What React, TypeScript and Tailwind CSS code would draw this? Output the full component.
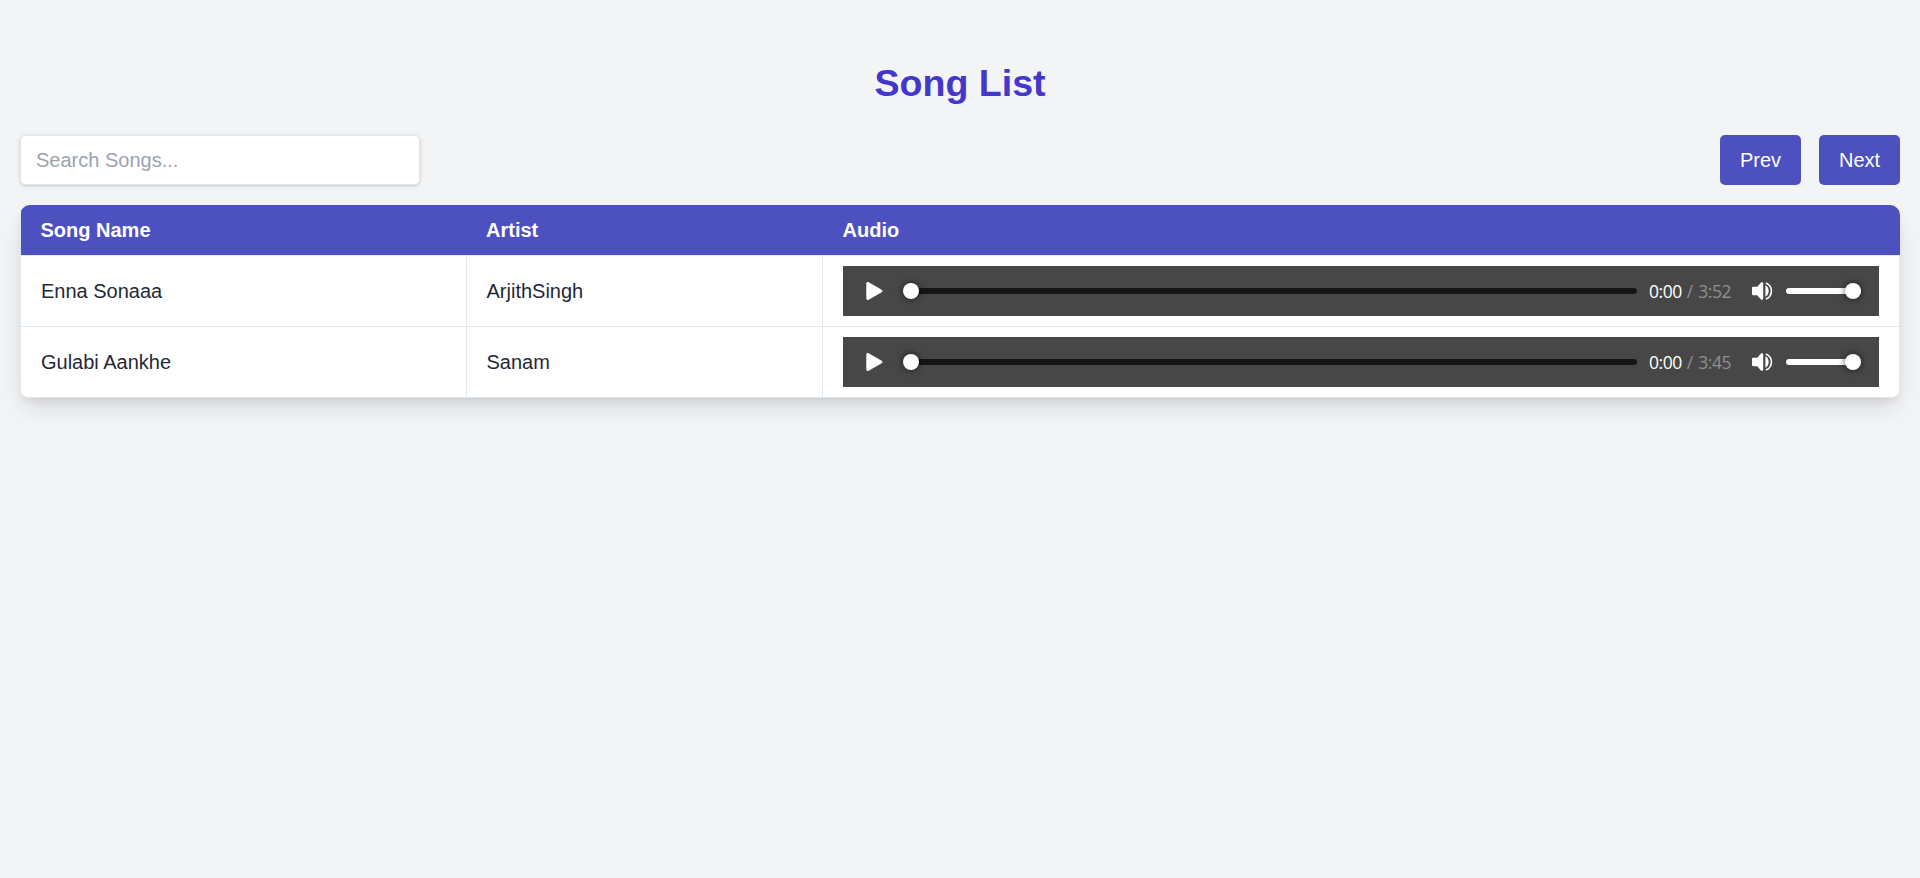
import React, { useState } from "react";

interface Song {
  name: string;
  artist: string;
  duration: string;
}

const songs: Song[] = [
  { name: "Enna Sonaaa", artist: "ArjithSingh", duration: "3:52" },
  { name: "Gulabi Aankhe", artist: "Sanam", duration: "3:45" },
];

function PlayIcon() {
  return (
    <svg width="18" height="18" viewBox="0 0 18 18" className="shrink-0 fill-white">
      <path d="M1.3 1.3C1.3.1 2.6-.4 3.7.2l13 7.5c1 .6 1 2 0 2.6l-13 7.5c-1.1.6-2.4.1-2.4-1.1z" />
    </svg>
  );
}

function VolumeIcon() {
  return (
    <svg width="21" height="18" viewBox="0 0 21 18" className="shrink-0">
      <path
        d="M1.2 4.8h4L9 .6c.8-.9 2.200-.4 2.200.8v15.200c0 1.200-1.400 1.700-2.200.8L5.200 13.200h-4C.5 13.200 0 12.700 0 12V6c0-.7.5-1.200 1.200-1.200z"
        fill="white"
      />
      <path d="M13.400 3.200c2.100 1 3.300 3.200 3.300 5.800s-1.200 4.800-3.300 5.800z" fill="white" />
      <path d="M13.800.9c3.400 1.300 5.600 4.300 5.600 8.100s-2.200 6.800-5.600 8.100" fill="none" stroke="white" strokeWidth="1.6" />
    </svg>
  );
}

function Thumb({ className }: { className: string }) {
  return (
    <div
      className={
        "absolute top-1/2 h-4 w-4 -translate-y-1/2 rounded-full bg-white shadow-[0_0_6px_1px_rgba(0,0,0,0.5)] " +
        className
      }
    />
  );
}

function AudioPlayer({ duration }: { duration: string }) {
  return (
    <div className="flex h-[50px] items-center bg-[#474747] pl-[22px] pr-[18px]">
      <PlayIcon />
      <div className="relative ml-5 h-1.5 flex-1 rounded-full bg-[#151515]">
        <Thumb className="left-0" />
      </div>
      <div className="ml-3 flex w-[84px] font-['Open_Sans',sans-serif] text-[17.5px] leading-6 tracking-[-0.45px] text-white">
        <span>0:00</span>
        <span className="ml-[5px] text-[#8f8f8f]">/</span>
        <span className="ml-[5.5px] text-[#8f8f8f]">{duration}</span>
      </div>
      <div className="ml-[19px] flex">
        <VolumeIcon />
      </div>
      <div className="relative ml-[13px] h-1.5 w-[74.5px] rounded-full bg-white">
        <Thumb className="right-0" />
      </div>
      <div className="w-[0.5px]" />
    </div>
  );
}

function PageButton({ children }: { children: React.ReactNode }) {
  return (
    <button className="h-[50px] w-[81px] rounded-[5px] bg-[#4c51bf] text-center text-[20px] leading-[30px] text-white">
      {children}
    </button>
  );
}

const columns = "grid grid-cols-[446px_356px_1fr]";

export default function App() {
  const [query, setQuery] = useState("");
  const visible = songs.filter((s) => s.name.toLowerCase().includes(query.toLowerCase()));

  return (
    <div className="min-h-screen bg-[#f3f4f6] px-5 pt-[61px] font-['Liberation_Sans',Arial,sans-serif] text-[20px] leading-[30px] text-[#1f2937]">
      <h1 className="mb-[29px] text-center text-[37.6px] font-bold leading-[45px] text-[#4338ca]">Song List</h1>
      <div className="mb-5 flex items-center justify-between">
        <input
          value={query}
          onChange={(e) => setQuery(e.target.value)}
          placeholder="Search Songs..."
          className="h-[50px] w-[400px] rounded-[5px] border border-gray-200 bg-white px-[15px] shadow-[0_1px_4px_rgba(0,0,0,0.1),0_1px_2px_rgba(0,0,0,0.1)] outline-none placeholder:text-[#9ca3af]"
        />
        <div className="flex gap-[18px]">
          <PageButton>Prev</PageButton>
          <PageButton>Next</PageButton>
        </div>
      </div>
      <div className="overflow-hidden rounded-[10px] bg-white shadow-[0_12.5px_25px_-3.75px_rgba(0,0,0,0.11),0_5px_8px_-2.5px_rgba(0,0,0,0.08)]">
        <div className="border-l border-[#e2e8f0]">
          <div className={columns + " h-[50px] items-center bg-[#4c51bf] font-bold text-white"}>
            <div className="pl-[19.5px]">Song Name</div>
            <div className="pl-[19px]">Artist</div>
            <div className="pl-[19.5px]">Audio</div>
          </div>
          <div className="border-r border-t border-[#e2e8f0]">
            {visible.map((song) => (
              <div key={song.name} className={columns + " h-[71px] border-b border-[#e2e8f0]"}>
                <div className="flex items-center border-r border-[#e2e8f0] pl-5">{song.name}</div>
                <div className="flex items-center border-r border-[#e2e8f0] pl-[19.5px]">{song.artist}</div>
                <div className="px-5 pt-2.5">
                  <AudioPlayer duration={song.duration} />
                </div>
              </div>
            ))}
          </div>
        </div>
      </div>
    </div>
  );
}
